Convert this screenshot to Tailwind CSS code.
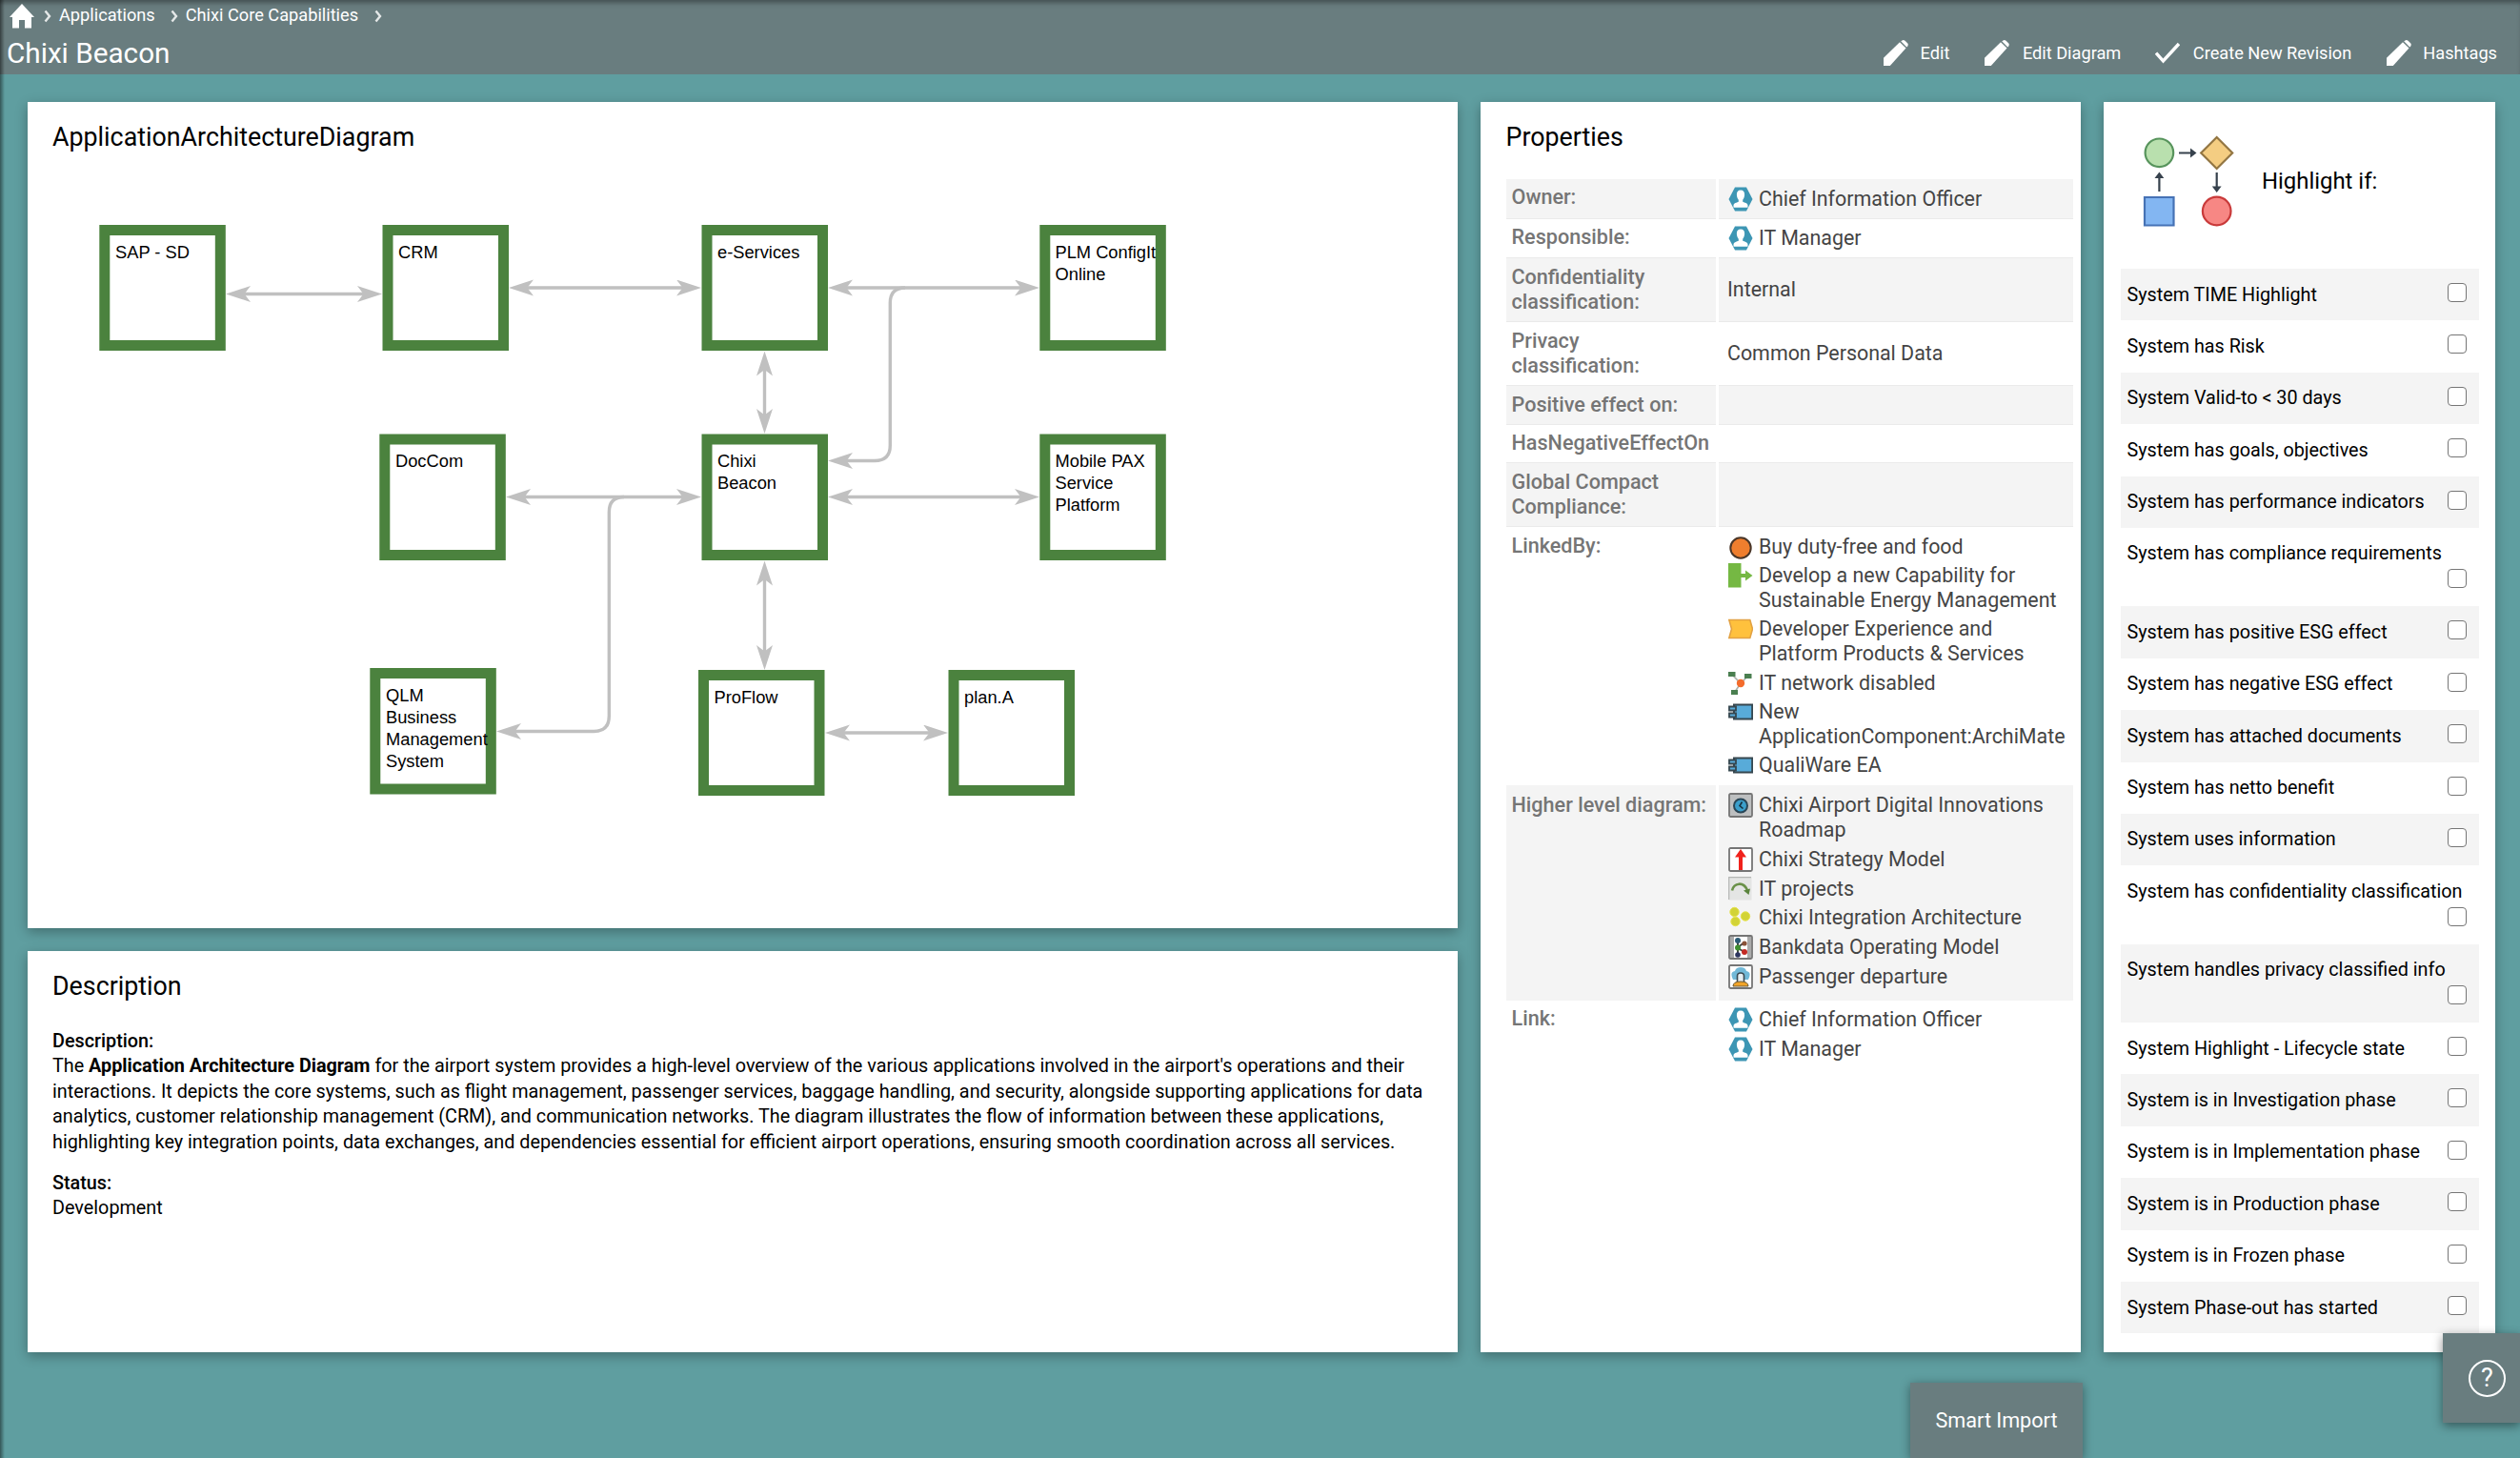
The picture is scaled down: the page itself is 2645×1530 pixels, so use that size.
<!DOCTYPE html>
<html lang="en">
<head>
<meta charset="utf-8">
<title>Chixi Beacon</title>
<script src="https://cdn.jsdelivr.net/npm/@tailwindcss/browser@4"></script>
</head>
<body class="relative flex h-[1530px] w-[2645px] flex-col overflow-hidden bg-[#5f9ea0] font-[Roboto,sans-serif] text-black">

<!-- Icon definitions -->
<svg class="hidden">
  <symbol id="pencil" viewBox="0 0 26 27"><path d="M0 27V18.800L17 2.300l6.500 6.200L6.800 27z" fill="#fff"/><path d="M18.200 1.300 19.500.4q1.500-.8 3 .3l2.600 2.600q1.200 1.400.2 2.900l-1 1.200z" fill="#fff"/></symbol>
  <symbol id="chev" viewBox="0 0 8 14"><path d="M1.500 1.500 6 7l-4.500 5.500" fill="none" stroke="#e4e8e8" stroke-width="2.400"/></symbol>
  <symbol id="person" viewBox="0 0 26 26"><path d="M7 .5h12L25.500 13 19 25.500H7L.5 13z" fill="#3d96b4"/><path d="M13 3.500c3 0 4.300 2 4.100 5-.1 2.300-.9 4-1.900 5.200v2c2 .9 5.300 1.500 5.300 3.800v2.300H5.500v-2.300c0-2.300 3.300-2.900 5.300-3.800v-2c-1-1.200-1.800-2.900-1.900-5.200-.2-3 1.100-5 4.100-5z" fill="#fff"/></symbol>
  <symbol id="comp" viewBox="0 0 26 26"><path d="M6 5.500h19.200v15H6z" fill="#58abd9" stroke="#36474f" stroke-width="2"/><path d="M1 7.500h7v4H1zM1 14.500h7v4H1z" fill="#58abd9" stroke="#36474f" stroke-width="1.800"/></symbol>
  <symbol id="frame" viewBox="0 0 26 26"><rect x="1" y="1" width="24" height="24" rx="1.500" fill="#fff" stroke="#757575" stroke-width="1.800"/></symbol>
</svg>

<header class="flex h-[78px] shrink-0 items-start justify-between bg-[#697d7f] text-white shadow-[inset_0_5px_5px_-2px_rgba(0,0,0,0.35)]">
  <div class="flex flex-col pl-[7px]">
    <nav class="flex h-[38px] items-start pt-1 text-[18.2px] leading-6">
      <svg class="ml-[3px] h-[26px] w-[26px]" viewBox="0 0 26 26"><path d="M13 0 0 14h3v11.500h7v-8.500h6v8.500h7V14h3z" fill="#fff"/></svg>
      <svg class="mt-[6px] ml-[10px] h-[14px] w-2"><use href="#chev"/></svg>
      <span class="ml-[8px]">Applications</span>
      <svg class="mt-[6px] ml-[16px] h-[14px] w-2"><use href="#chev"/></svg>
      <span class="ml-[8px]">Chixi Core Capabilities</span>
      <svg class="mt-[6px] ml-[17px] h-[14px] w-2"><use href="#chev"/></svg>
    </nav>
    <h1 class="text-[29.700px] leading-9">Chixi Beacon</h1>
  </div>
  <div class="flex items-start pt-[42px] pr-6 text-[18.2px] leading-5">
    <svg class="h-[27px] w-[26px]"><use href="#pencil"/></svg><span class="ml-[13px] pt-[4px]">Edit</span>
    <svg class="ml-[37px] h-[27px] w-[26px]"><use href="#pencil"/></svg><span class="ml-[13.500px] pt-[4px]">Edit Diagram</span>
    <svg class="ml-[36px] h-[27px] w-[26px]" viewBox="0 0 26 27"><path d="M1 13.500 8.500 22 25 4" fill="none" stroke="#fff" stroke-width="3.400"/></svg><span class="ml-[13.500px] pt-[4px]">Create New Revision</span>
    <svg class="ml-[37px] h-[27px] w-[26px]"><use href="#pencil"/></svg><span class="ml-3 pt-[4px]">Hashtags</span>
  </div>
</header>

<main class="flex items-start gap-6 pt-[29px] pl-[29px]">
  <div class="flex w-[1501px] shrink-0 flex-col gap-6">
    <section class="flex h-[867px] flex-col bg-white pt-[21px] shadow-[0_4px_12px_rgba(0,0,0,0.3)]">
      <h2 class="pl-[26px] text-[26.800px] leading-8">ApplicationArchitectureDiagram</h2>
      <svg class="h-[814px] w-[1501px]" viewBox="29 160 1501 814">
        <defs>
          <marker id="a" markerUnits="userSpaceOnUse" markerWidth="28" markerHeight="18" refX="26" refY="8.500" orient="auto-start-reverse"><path d="M26 8.500 0 0 6.500 8.500 0 17z" fill="#c0c0c0"/></marker>
        </defs>
        <g fill="none" stroke="#4b823e" stroke-width="11">
          <rect x="109.800" y="241.500" width="121.500" height="121"/>
          <rect x="407" y="241.500" width="121.500" height="121"/>
          <rect x="742" y="241.500" width="121.500" height="121"/>
          <rect x="1096.800" y="241.500" width="121.500" height="121"/>
          <rect x="403.800" y="461" width="121.500" height="121.500"/>
          <rect x="742" y="461" width="121.500" height="121.500"/>
          <rect x="1096.800" y="461" width="121.500" height="121.500"/>
          <rect x="393.800" y="706.500" width="121.500" height="121.500"/>
          <rect x="738.500" y="708.500" width="121.500" height="121"/>
          <rect x="1001" y="708.500" width="121.500" height="121"/>
        </g>
        <g fill="none" stroke="#c0c0c0" stroke-width="3.400">
          <path d="M256 308.500H382M553 302H717M888 302H1072M549 521.500H717M888 521.500H1072M884 769H977M802.500 387V436M802.500 607V684"/>
          <path d="M888 483.500H918Q934.300 483.500 934.300 467.500V318Q934.300 302 950 302"/>
          <path d="M540 767.500H623Q639.300 767.500 639.300 751.500V537.500Q639.300 521.500 655 521.500"/>
        </g>
        <g stroke="none" fill="none">
          <path d="M237 308.500H401" marker-start="url(#a)" marker-end="url(#a)"/>
          <path d="M534 302H736" marker-start="url(#a)" marker-end="url(#a)"/>
          <path d="M869 302H1091" marker-start="url(#a)" marker-end="url(#a)"/>
          <path d="M531 521.500H736" marker-start="url(#a)" marker-end="url(#a)"/>
          <path d="M869 521.500H1091" marker-start="url(#a)" marker-end="url(#a)"/>
          <path d="M866 769H995" marker-start="url(#a)" marker-end="url(#a)"/>
          <path d="M802.500 368.500V455" marker-start="url(#a)" marker-end="url(#a)"/>
          <path d="M802.500 588.500V703" marker-start="url(#a)" marker-end="url(#a)"/>
          <path d="M869 483.500H900" marker-start="url(#a)"/>
          <path d="M521 767.500H560" marker-start="url(#a)"/>
        </g>
        <g class="font-['Liberation_Sans',Arial,sans-serif] text-[18.300px]" fill="#000">
          <text x="121" y="271">SAP - SD</text>
          <text x="418" y="271">CRM</text>
          <text x="753" y="271">e-Services</text>
          <text x="1107.500" y="271">PLM ConfigIt</text><text x="1107.500" y="294">Online</text>
          <text x="415" y="490">DocCom</text>
          <text x="753" y="490">Chixi</text><text x="753" y="513">Beacon</text>
          <text x="1107.500" y="490">Mobile PAX</text><text x="1107.500" y="513">Service</text><text x="1107.500" y="536">Platform</text>
          <text x="405" y="736">QLM</text><text x="405" y="759">Business</text><text x="405" y="782">Management</text><text x="405" y="805">System</text>
          <text x="749.500" y="738">ProFlow</text>
          <text x="1012" y="738">plan.A</text>
        </g>
      </svg>
    </section>

    <section class="h-[421px] bg-white pt-[21px] pl-[26px] shadow-[0_4px_12px_rgba(0,0,0,0.3)]">
      <h2 class="text-[26.800px] leading-8">Description</h2>
      <div class="mt-[29px] text-[19.8px] leading-[26.400px] whitespace-nowrap">
        <p class="font-medium">Description:</p>
        <p>The <b class="font-bold">Application Architecture Diagram</b> for the airport system provides a high-level overview of the various applications involved in the airport's operations and their<br>interactions. It depicts the core systems, such as flight management, passenger services, baggage handling, and security, alongside supporting applications for data<br>analytics, customer relationship management (CRM), and communication networks. The diagram illustrates the flow of information between these applications,<br>highlighting key integration points, data exchanges, and dependencies essential for efficient airport operations, ensuring smooth coordination across all services.</p>
        <p class="mt-[16.500px] font-medium">Status:</p>
        <p>Development</p>
      </div>
    </section>
  </div>

  <section class="flex h-[1312px] w-[630px] shrink-0 flex-col bg-white pt-[21px] pl-[26.500px] shadow-[0_4px_12px_rgba(0,0,0,0.3)]">
    <h2 class="text-[26.800px] leading-8">Properties</h2>
    <dl class="mt-7 flex w-[595px] flex-col text-[21.400px] leading-[26px] text-[#444] whitespace-nowrap [&_dt]:text-[21.600px]">
      <div class="flex h-[42px] gap-[3px]">
        <dt class="w-[220px] shrink-0 border-b border-[#eaeaea] bg-[#f4f4f4] pt-1.5 pl-1.5 font-medium text-[#757575]">Owner:</dt>
        <dd class="flex flex-1 gap-[6px] border-b border-[#eaeaea] bg-[#f4f4f4] pt-2 pl-[10.500px]"><svg class="size-[26px]"><use href="#person"/></svg>Chief Information Officer</dd>
      </div>
      <div class="flex h-10 gap-[3px]">
        <dt class="w-[220px] shrink-0 pt-1.5 pl-1.5 font-medium text-[#757575]">Responsible:</dt>
        <dd class="flex flex-1 gap-[6px] pt-[7px] pl-[10.500px]"><svg class="size-[26px]"><use href="#person"/></svg>IT Manager</dd>
      </div>
      <div class="flex h-[68px] gap-[3px]">
        <dt class="w-[220px] shrink-0 border-y border-[#eaeaea] bg-[#f4f4f4] pt-[7px] pl-1.5 font-medium text-[#757575]">Confidentiality<br>classification:</dt>
        <dd class="flex-1 border-y border-[#eaeaea] bg-[#f4f4f4] pt-5 pl-[9.500px]">Internal</dd>
      </div>
      <div class="flex h-[66px] gap-[3px]">
        <dt class="w-[220px] shrink-0 pt-[7px] pl-1.5 font-medium text-[#757575]">Privacy<br>classification:</dt>
        <dd class="flex-1 pt-5 pl-[9.500px]">Common Personal Data</dd>
      </div>
      <div class="flex h-[42px] gap-[3px]">
        <dt class="w-[220px] shrink-0 border-y border-[#eaeaea] bg-[#f4f4f4] pt-[7px] pl-1.5 font-medium text-[#757575]">Positive effect on:</dt>
        <dd class="flex-1 border-y border-[#eaeaea] bg-[#f4f4f4]"></dd>
      </div>
      <div class="flex h-[39px] gap-[3px]">
        <dt class="w-[220px] shrink-0 pt-1.5 pl-1.5 font-medium text-[#757575]">HasNegativeEffectOn</dt>
        <dd class="flex-1"></dd>
      </div>
      <div class="flex h-[68px] gap-[3px]">
        <dt class="w-[220px] shrink-0 border-y border-[#eaeaea] bg-[#f4f4f4] pt-[7px] pl-1.5 font-medium text-[#757575]">Global Compact<br>Compliance:</dt>
        <dd class="flex-1 border-y border-[#eaeaea] bg-[#f4f4f4]"></dd>
      </div>
      <div class="flex h-[271px] gap-[3px]">
        <dt class="w-[220px] shrink-0 pt-[7px] pl-1.5 font-medium text-[#757575]">LinkedBy:</dt>
        <dd class="flex flex-1 flex-col gap-[4.200px] pt-2 pl-[10.500px]">
          <div class="flex gap-[6px]"><svg class="size-[26px]" viewBox="0 0 26 26"><circle cx="13" cy="14" r="10.700" fill="#ef7e2e" stroke="#4a3628" stroke-width="2"/></svg>Buy duty-free and food</div>
          <div class="flex gap-[6px]"><svg class="size-[26px]" viewBox="0 0 26 26"><path d="M0 0h13.500v25.500H0z" fill="#75b843"/><path d="M13 13h7" stroke="#75b843" stroke-width="4"/><path d="M18 7.500 25.500 13 18 18.500z" fill="#75b843"/></svg><span>Develop a new Capability for<br>Sustainable Energy Management</span></div>
          <div class="flex gap-[6px]"><svg class="size-[26px]" viewBox="0 0 26 26"><path d="M.8 3.500h22L25.500 13l-2.700 9.500H.8L3.500 13z" fill="#ffc13d" stroke="#e2a244" stroke-width="1.600"/></svg><span>Developer Experience and<br>Platform Products &amp; Services</span></div>
          <div class="flex gap-[6px]"><svg class="size-[26px]" viewBox="0 0 26 26"><path d="m4 4 9 9 8-8M13 13 7 22" fill="none" stroke="#aab0aa" stroke-width="1.600"/><path d="M0 1h7.500v5H0zM17 3h7.500v5H17zM3 20h7v5H3z" fill="#4a7f50"/><circle cx="13" cy="13" r="4.200" fill="#f46c2c"/></svg>IT network disabled</div>
          <div class="flex gap-[6px]"><svg class="size-[26px]"><use href="#comp"/></svg><span>New<br>ApplicationComponent:ArchiMate</span></div>
          <div class="flex gap-[6px]"><svg class="size-[26px]"><use href="#comp"/></svg>QualiWare EA</div>
        </dd>
      </div>
      <div class="flex h-[226px] gap-[3px]">
        <dt class="w-[220px] shrink-0 bg-[#f4f4f4] pt-2 pl-1.5 font-medium text-[#757575]">Higher level diagram:</dt>
        <dd class="flex flex-1 flex-col gap-[4.800px] bg-[#f4f4f4] pt-2 pl-[10.500px]">
          <div class="flex gap-[6px]"><svg class="size-[26px]" viewBox="0 0 26 26"><rect x="1" y="1" width="24" height="24" rx="1.500" fill="#bdbfc0" stroke="#757575" stroke-width="1.800"/><circle cx="13" cy="13.500" r="7" fill="#3b9fcb" stroke="#2a4656" stroke-width="2"/><path d="M14.500 9.500 12 13.500l3.500 3" fill="none" stroke="#16303f" stroke-width="1.600"/></svg><span>Chixi Airport Digital Innovations<br>Roadmap</span></div>
          <div class="flex gap-[6px]"><svg class="size-[26px]" viewBox="0 0 26 26"><use href="#frame"/><path d="M13 2 19 10.500h-4V24h-4V10.500H7z" fill="#f0221c"/></svg>Chixi Strategy Model</div>
          <div class="flex gap-[6px]"><svg class="size-[26px]" viewBox="0 0 26 26"><path d="M.5.500H24.500V24.500H.5z" fill="#e4e5e4"/><path d="M.7 24V.7H24" fill="none" stroke="#b4b6b4" stroke-width="1.200"/><path d="M4 14.500C6 6 16 5 20 14" fill="none" stroke="#6a9149" stroke-width="2.600"/><path d="m16 14.500 7-2-1.500 6.500z" fill="#5a843c"/></svg>IT projects</div>
          <div class="flex gap-[6px]"><svg class="size-[26px]" viewBox="0 0 26 26" fill="#d2d336" stroke="#e6e34c"><circle cx="6.500" cy="7" r="4.700"/><circle cx="18" cy="11.500" r="4.700"/><circle cx="7.500" cy="17" r="4.700"/></svg>Chixi Integration Architecture</div>
          <div class="flex gap-[6px]"><svg class="size-[26px]" viewBox="0 0 26 26"><use href="#frame"/><path d="M2 2h4v22H2zM20 2h4v22h-4z" fill="#aaa"/><path d="M10 6v15M10 13l7-5M10 14l7 4" stroke="#444" stroke-width="2"/><circle cx="10" cy="6" r="3" fill="#2b5b75"/><circle cx="17" cy="9" r="2.600" fill="#8a5238"/><circle cx="10" cy="13.500" r="3" fill="#3f8f30"/><circle cx="17" cy="18" r="3" fill="#c42a24"/><circle cx="10" cy="21" r="2.800" fill="#2e3560"/></svg>Bankdata Operating Model</div>
          <div class="flex gap-[6px]"><svg class="size-[26px]" viewBox="0 0 26 26"><use href="#frame"/><path d="M5 16Q1 8 7 7q1-4 6-4t6 4q6 1 2 9z" fill="#72b9d8"/><path d="M9.500 20V12q0-3 3.500-3t3.500 3v8z" fill="#e6eef2" stroke="#3c4a52" stroke-width="1.600"/><path d="M5 23q0-5 8-5t8 5z" fill="#f2a428" stroke="#6b5a35"/></svg>Passenger departure</div>
        </dd>
      </div>
      <div class="flex gap-[3px]">
        <dt class="w-[220px] shrink-0 pt-1.5 pl-1.5 font-medium text-[#757575]">Link:</dt>
        <dd class="flex flex-1 flex-col gap-[4.800px] pt-[7px] pl-[10.500px]">
          <div class="flex gap-[6px]"><svg class="size-[26px]"><use href="#person"/></svg>Chief Information Officer</div>
          <div class="flex gap-[6px]"><svg class="size-[26px]"><use href="#person"/></svg>IT Manager</div>
        </dd>
      </div>
    </dl>
  </section>

  <section class="h-[1312px] w-[411px] shrink-0 bg-white pr-[17px] pl-[18px] shadow-[0_4px_12px_rgba(0,0,0,0.3)]">
    <div class="flex h-[175px] items-start">
      <svg class="mt-[31px] ml-[19px] h-[107px] w-[105px]" viewBox="2245 138 105 107">
        <g stroke-width="2.200"><circle cx="2266.400" cy="160.300" r="14.800" fill="#b9e0ae" stroke="#57945c"/><path d="m2326.700 144 16.500 16.500-16.500 16.500-16.500-16.500z" fill="#f4cd82" stroke="#937643"/><path d="M2251 207h30.500v29.500H2251z" fill="#83b6f2" stroke="#4672b5"/><circle cx="2326.700" cy="221.500" r="14.800" fill="#f78784" stroke="#c93a3a"/></g>
        <path d="M2287 160.500h13M2266.400 201v-14M2326.700 181v15" stroke="#37424d" stroke-width="2.200"/>
        <path d="m2299 155.500 6.500 5-6.500 5zM2261.500 187l4.900-6.500 4.900 6.500zM2321.800 195.500l4.900 6.500 4.900-6.500z" fill="#37424d"/>
      </svg>
      <h2 class="mt-[68px] ml-[24px] text-[23.900px] leading-[30px]">Highlight if:</h2>
    </div>
    <ul class="text-[19.750px] leading-[26px] whitespace-nowrap [&>li]:flex [&>li]:h-[54.400px] [&>li]:flex-wrap [&>li]:content-start [&>li]:justify-between [&>li]:pt-[14.500px] [&>li]:pr-[13px] [&>li]:pl-[6.500px] [&>li:nth-child(odd)]:bg-[#f4f4f4] [&_i]:mt-[0.500px] [&_i]:size-5 [&_i]:rounded-[4px] [&_i]:border-[1.500px] [&_i]:border-[#767676] [&_i]:bg-white">
      <li><span>System TIME Highlight</span><i></i></li>
      <li><span>System has Risk</span><i></i></li>
      <li><span>System Valid-to &lt; 30 days</span><i></i></li>
      <li><span>System has goals, objectives</span><i></i></li>
      <li><span>System has performance indicators</span><i></i></li>
      <li class="h-[82.400px]!"><span class="w-full">System has compliance requirements</span><i class="mt-[3px]! ml-auto"></i></li>
      <li><span>System has positive ESG effect</span><i></i></li>
      <li><span>System has negative ESG effect</span><i></i></li>
      <li><span>System has attached documents</span><i></i></li>
      <li><span>System has netto benefit</span><i></i></li>
      <li><span>System uses information</span><i></i></li>
      <li class="h-[82.400px]!"><span class="w-full">System has confidentiality classification</span><i class="mt-[3px]! ml-auto"></i></li>
      <li class="h-[82.400px]!"><span class="w-full">System handles privacy classified info</span><i class="mt-[3px]! ml-auto"></i></li>
      <li><span>System Highlight - Lifecycle state</span><i></i></li>
      <li><span>System is in Investigation phase</span><i></i></li>
      <li><span>System is in Implementation phase</span><i></i></li>
      <li><span>System is in Production phase</span><i></i></li>
      <li><span>System is in Frozen phase</span><i></i></li>
      <li><span>System Phase-out has started</span><i></i></li>
    </ul>
  </section>
</main>

<!-- Floating controls -->
<button class="absolute bottom-0 left-[2005px] h-[79px] w-[181px] bg-[#697d7f] pt-0.5 text-[21.600px] text-white shadow-[0_2px_10px_rgba(0,0,0,0.4)]">Smart Import</button>
<button class="absolute top-[1399px] right-0 flex h-[94px] w-[81px] items-center bg-[#697d7f] pl-[27px] shadow-[0_3px_10px_rgba(0,0,0,0.45)]">
  <span class="flex size-[39px] items-center justify-center rounded-full border-2 border-white text-[27px] leading-none text-white">?</span>
</button>
<div class="absolute top-0 left-0 h-full w-[5px] bg-linear-to-r from-black/45 to-transparent"></div>
</body>
</html>
